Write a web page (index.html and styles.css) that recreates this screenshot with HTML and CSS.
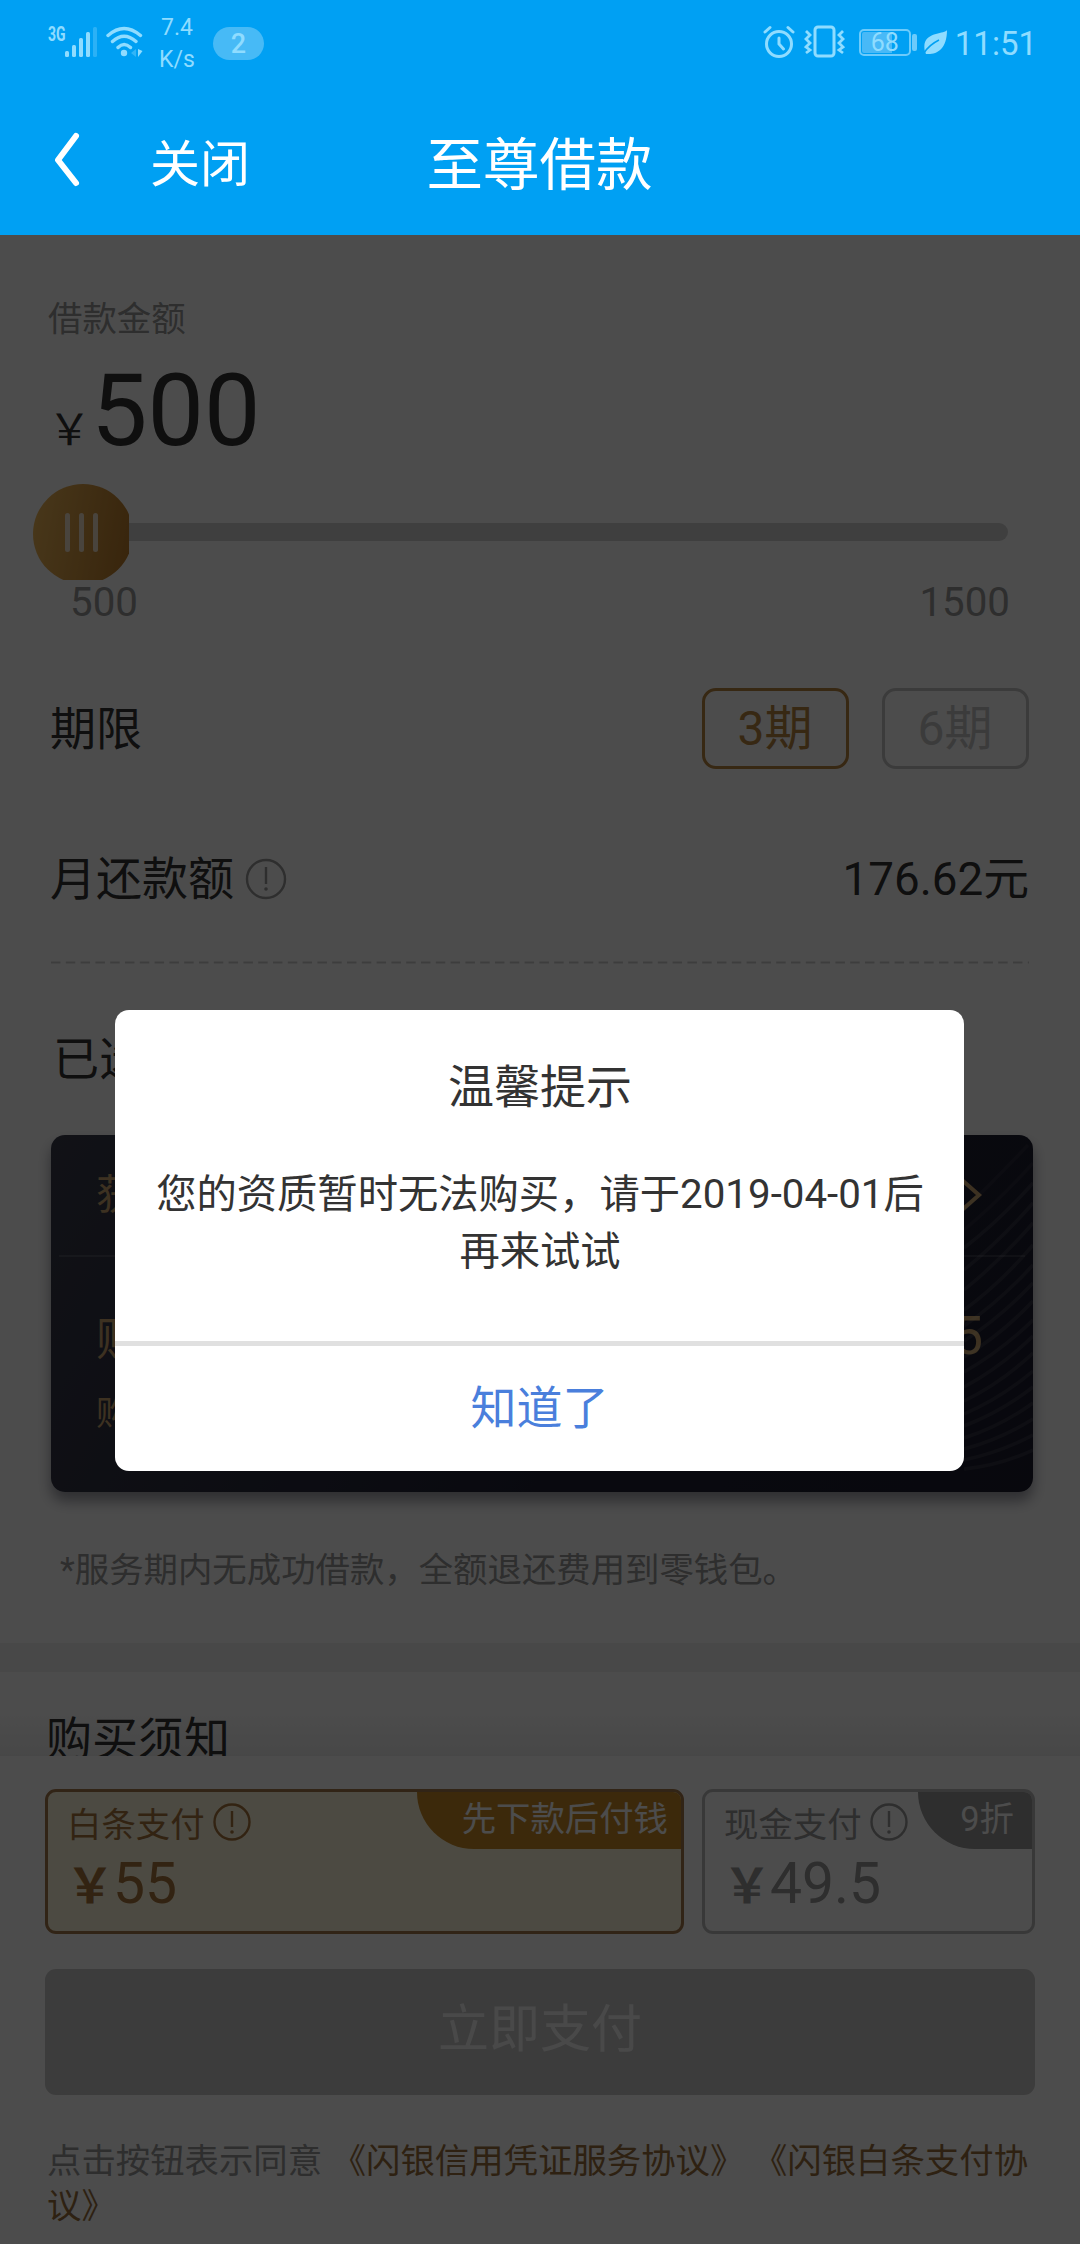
FILE: index.html
```html
<!DOCTYPE html>
<html lang="zh-CN">
<head>
<meta charset="utf-8">
<title>至尊借款</title>
<link rel="stylesheet" href="styles.css">
</head>
<body>
<div class="phone">
  <header class="header">
    <div class="status">
      <div class="status-left">
        <span class="net">3G</span>
        <svg class="signal" width="34" height="32" viewBox="0 0 34 32" fill="currentColor"><rect x="0" y="25" width="4" height="6" rx="1.5"/><rect x="7" y="19" width="4" height="12" rx="1.5"/><rect x="14" y="12" width="4" height="19" rx="1.5"/><rect x="21" y="6" width="4" height="25" rx="1.5"/><rect x="28" y="1" width="4" height="30" rx="1.5" opacity=".3"/></svg>
        <svg class="wifi" width="38" height="32" viewBox="0 0 38 32" fill="none" stroke="currentColor" stroke-width="3.4" stroke-linecap="round"><path d="M2 9.500Q18 -4.500 34.500 9.500M6.500 15.500Q18 5 30 15.500M12 21.500Q18 15.500 24.500 21.500"/><circle cx="18" cy="27" r="3.200" fill="currentColor" stroke="none"/><path d="M32 23v8l4.500-6z" fill="currentColor" stroke="none"/><path d="M30 23v8l-5-4z" fill="currentColor" stroke="none" opacity=".35"/></svg>
        <span class="speed">7.4<br>K/s</span>
        <span class="pill">2</span>
      </div>
      <div class="status-right">
        <svg class="alarm" width="32" height="33" viewBox="0 0 32 33" fill="none" stroke="currentColor" stroke-width="3" stroke-linecap="round"><circle cx="16" cy="19" r="12.500"/><path d="M16 13v6l4.500 5M2 7l5-4.500M30 7l-5-4.500"/></svg>
        <svg class="vibrate" width="42" height="33" viewBox="0 0 42 33" fill="none" stroke="currentColor" stroke-width="3"><rect x="11" y="2" width="19" height="29" rx="3"/><path d="M2 6l4 4-4 4 4 4-4 4 4 3-4 3M39 6l-4 4 4 4-4 4 4 4-4 3 4 3" stroke-width="2.800"/></svg>
        <span class="battery"><span class="battery-body">68</span><span class="battery-cap"></span></span>
        <svg class="leaf" width="25" height="26" viewBox="0 0 25 26"><path d="M24 1C22 5 4 3 1.500 15C1 19 1.500 22 3 25C13 26 24 21 24 1z" fill="currentColor"/><path d="M1 24Q6 16 16 11" fill="none" stroke="#00a0f3" stroke-width="1.500"/></svg>
        <span class="clock">11:51</span>
      </div>
    </div>
    <nav class="nav">
      <svg class="back" width="28" height="56" viewBox="0 0 28 56" fill="none" stroke="#fff" stroke-width="6" stroke-linecap="round" stroke-linejoin="round"><path d="M23 5L5 29L23 52"/></svg>
      <span class="close">关闭</span>
      <h1 class="title">至尊借款</h1>
    </nav>
  </header>

  <div class="view">
    <main class="content">
      <div class="label">借款金额</div>
      <div class="amount"><span class="yen">￥</span><span class="value">500</span></div>
      <div class="slider">
        <div class="thumb-clip"><div class="thumb"><i></i><i></i><i></i></div></div>
        <div class="track"></div>
      </div>
      <div class="range"><span>500</span><span>1500</span></div>
      <div class="row terms">
        <span class="row-text">期限</span>
        <div class="options"><span class="option active">3期</span><span class="option">6期</span></div>
      </div>
      <div class="row monthly">
        <span class="with-info"><span class="row-text">月还款额</span><svg class="info-lg" width="42" height="42" viewBox="0 0 42 42" fill="none" stroke="currentColor" stroke-width="2.400"><circle cx="21" cy="21" r="19"/><path d="M21 9v17"/><circle cx="21" cy="31" r="1.800" fill="currentColor" stroke="none"/></svg></span>
        <span class="row-text sum">176.62元</span>
      </div>
      <svg class="dash" width="978" height="3"><path d="M0 1.500H978" stroke="#cdcdcd" stroke-width="2" stroke-dasharray="9.500 5.300"/></svg>
      <div class="row selected">已选</div>
      <section class="vip">
        <svg class="waves" width="240" height="357" viewBox="0 0 240 357" fill="none" stroke="#fff" stroke-opacity=".09" stroke-width="3.500"><path stroke-opacity=".05" d="M171 75Q205 42 235 10M171 95Q208 64 240 28"/><path d="M171 113Q208 84 240 48M171 135Q208 105 240 68M171 155Q208 125 240 88M171 175Q208 148 240 110M171 191Q208 165 240 130M171 206Q208 182 240 148M171 222Q208 200 240 166M171 237Q208 216 240 185M171 252Q208 232 240 201M171 266Q208 248 240 218M171 279Q208 263 240 236M171 291Q208 277 240 252M171 303Q208 291 240 268M171 314Q208 304 240 284M171 325Q208 317 240 300M171 334Q208 330 240 315"/></svg>
        <div class="vip-head"><span>获</span><svg width="24" height="36" viewBox="0 0 24 36" fill="none" stroke="currentColor" stroke-width="4"><path d="M3 3L20 18L3 33"/></svg></div>
        <div class="vip-line"></div>
        <div class="vip-price"><span>购</span><strong>55</strong></div>
        <div class="vip-note">购</div>
      </section>
      <p class="footnote">*服务期内无成功借款，全额退还费用到零钱包。</p>
      <div class="band"></div>
      <h2 class="notice">购买须知</h2>
    </main>

    <footer class="pay">
      <div class="methods">
        <div class="method gold">
          <div class="method-name">白条支付<svg width="38" height="38" viewBox="0 0 38 38" fill="none" stroke="currentColor" stroke-width="2.400"><circle cx="19" cy="19" r="17.500"/><path d="M19 8v16"/><circle cx="19" cy="29" r="1.800" fill="currentColor" stroke="none"/></svg></div>
          <div class="price"><b>￥</b>55</div>
          <span class="tag">先下款后付钱</span>
        </div>
        <div class="method cash">
          <div class="method-name">现金支付<svg width="38" height="38" viewBox="0 0 38 38" fill="none" stroke="currentColor" stroke-width="2.400"><circle cx="19" cy="19" r="17.500"/><path d="M19 8v16"/><circle cx="19" cy="29" r="1.800" fill="currentColor" stroke="none"/></svg></div>
          <div class="price"><b>￥</b>49.5</div>
          <span class="tag">9折</span>
        </div>
      </div>
      <div class="submit">立即支付</div>
      <p class="agree">点击按钮表示同意 <a>《闪银信用凭证服务协议》</a> <a>《闪银白条支付协议》</a></p>
    </footer>

    <div class="overlay">
      <div class="dialog">
        <h3 class="dialog-title">温馨提示</h3>
        <p class="dialog-text">您的资质暂时无法购买，请于2019-04-01后再来试试</p>
        <div class="dialog-ok">知道了</div>
      </div>
    </div>
  </div>
</div>
</body>
</html>
```
FILE: styles.css
```css
* { box-sizing: border-box; margin: 0; padding: 0; }
body { font-family: Roboto, "Noto Sans CJK SC", sans-serif; color: #333; background: #fff; }
svg { display: block; flex: none; }
h1, h2, h3 { font-weight: 400; }
.phone { width: 1080px; height: 2244px; display: flex; flex-direction: column; overflow: hidden; }

/* header */
.header { height: 235px; flex: none; background: #00a0f3; color: #fff; }
.status { height: 86px; display: flex; justify-content: space-between; color: #8fdcff; padding: 0 43px 0 48px; }
.status-left, .status-right { display: flex; align-items: flex-start; }
.net { font-size: 20px; font-weight: 700; line-height: 20px; width: 17px; margin-top: 24px; transform: scaleX(.7); transform-origin: left; white-space: nowrap; }
.signal { margin-top: 26px; }
.wifi { margin: 26px 0 0 7px; }
.speed { font-size: 23px; line-height: 32px; margin-top: 12px; margin-left: 15px; width: 36px; text-align: center; }
.pill { width: 51px; height: 33px; border-radius: 17px; background: rgba(255,255,255,.28); font-size: 27px; font-weight: 500; line-height: 34px; text-align: center; margin: 27px 0 0 18px; }
.alarm { margin-top: 25px; }
.vibrate { margin: 25px 0 0 9px; }
.battery { display: flex; align-items: center; gap: 1px; margin: 29px 0 0 13px; }
.battery-body { width: 52px; height: 27px; border: 2px solid #6dcbfb; border-radius: 5px; font-size: 25px; line-height: 22px; text-align: center; background: linear-gradient(90deg, #48b9f7 66%, transparent 66%) content-box; padding: 1px; }
.battery-cap { width: 5px; height: 17px; background: #6dcbfb; border-radius: 2px; }
.leaf { margin: 29px 0 0 6px; }
.clock { font-size: 33px; line-height: 40px; margin: 24px 0 0 7px; }
.nav { height: 149px; display: grid; grid-template-columns: 97px 1fr auto 1fr; align-items: center; padding: 0 53px; }
.back { margin-top: -3px; }
.close { font-size: 50px; line-height: 60px; margin-top: 8px; }
.title { font-size: 56.500px; line-height: 70px; margin-top: 10px; position: relative; left: -49px; }

/* loan form */
.view { flex: 1; min-height: 0; position: relative; display: flex; flex-direction: column; }
.content { flex: 1; min-height: 0; overflow: hidden; padding-top: 62px; display: flex; flex-direction: column; font-size: 46px; background: linear-gradient(180deg, #fff 1475px, #efefef 1521px); }
.content > * { flex: none; }
.label { font-size: 34.400px; line-height: 44px; color: #999; padding-left: 48px; }
.amount { margin-top: 12px; height: 116px; line-height: 116px; padding-left: 48px; display: flex; align-items: baseline; }
.yen { font-size: 43px; }
.value { font-size: 100.500px; }
.slider { height: 96px; margin: 15px 72px 0 33px; display: flex; align-items: center; }
.thumb-clip { width: 96px; height: 96px; overflow: hidden; flex: none; }
.thumb { width: 100px; height: 100px; border-radius: 50%; background: linear-gradient(100deg, #f2ba5a, #b87828); display: flex; justify-content: center; align-items: center; gap: 9px; padding: 0 3px 3px 0; }
.thumb i { width: 5px; height: 39px; border-radius: 3px; background: #f6e4cb; }
.track { flex: 1; height: 18px; background: #d4d4d4; border-radius: 0 9px 9px 0; }
.range { height: 42px; line-height: 45px; font-size: 40.300px; color: #999; display: flex; justify-content: space-between; padding: 0 70px 0 70px; }
.row { display: flex; justify-content: space-between; align-items: center; padding: 0 51px 0 50px; height: 60px; }
.row-text { padding-bottom: 8px; }
.sum { font-size: 45.800px; }
.terms { height: 81px; margin-top: 66px; }
.options { display: flex; gap: 33px; }
.option { width: 147px; height: 81px; border: 3px solid #c6c6c6; border-radius: 14px; font-size: 48px; line-height: 75px; text-align: center; color: #c6c6c6; padding-right: 1px; }
.option.active { border-color: #b98542; color: #b98542; }
.monthly { margin-top: 80px; }
.with-info { display: flex; align-items: center; }
.info-lg { margin: 0 0 0 11px; color: #999; }
.dash { margin: 52px 0 0 51px; }
.selected { margin-top: 61px; padding-left: 53px; }

/* membership card */
.vip { position: relative; margin: 50px 47px 0 51px; height: 357px; border-radius: 14px; background: linear-gradient(120deg, #3a3c4c, #1f2034 60%, #1c1c2e); box-shadow: 0 9px 14px rgba(30,30,50,.45); color: #cba670; padding: 16px 50px 0 45px; }
.waves { position: absolute; right: 0; top: 0; border-radius: 14px; }
.vip-head { display: flex; justify-content: space-between; align-items: center; height: 84px; font-size: 41px; }
.vip-head span { padding-bottom: 4px; }
.vip-head svg { margin-top: 4px; }
.vip-line { height: 2px; margin: 20px -42px 0 -37px; background: rgba(255,255,255,.12); }
.vip-price { display: flex; justify-content: space-between; align-items: center; height: 84px; font-size: 46px; margin-top: 37px; }
.vip-price span { padding-bottom: 2px; }
.vip-price strong { font-size: 53px; font-weight: 400; }
.vip-note { font-size: 34.400px; line-height: 44px; margin-top: 13px; }
.footnote { margin-top: 56px; font-size: 34.400px; line-height: 44px; padding-left: 60px; color: #999; }
.band { height: 29px; margin-top: 51px; background: #f2f2f2; }
.notice { margin-top: 38px; font-size: 46px; line-height: 58px; padding-left: 46px; }

/* payment */
.pay { flex: none; height: 488px; background: #fff; padding: 33px 45px 0; }
.methods { display: grid; grid-template-columns: 639px 333px; gap: 18px; }
.method { position: relative; height: 145px; border: 3px solid #bdbdbd; border-radius: 11px; overflow: hidden; color: #999; padding: 11px 0 0 19px; }
.method-name { display: flex; align-items: center; height: 38px; font-size: 34.400px; gap: 8px; }
.price { font-size: 57px; line-height: 66px; margin: 10px 0 0 -1px; display: flex; align-items: baseline; }
.price b { font-size: 48px; font-weight: 700; margin-right: -1px; }
.tag { position: absolute; top: 0; right: 0; height: 57px; line-height: 55px; font-size: 34.400px; color: #fff; border-bottom-left-radius: 57px; text-align: right; padding-right: 13px; }
.gold { background: #fff8dc; border-color: #a6784a; color: #a9753c; }
.gold .tag { width: 264px; background: #c98a25; }
.cash .tag { width: 114px; background: #999; padding-right: 18px; }
.submit { margin-top: 35px; height: 126px; border-radius: 11px; background: #c9c9c9; color: #f5f5f5; font-size: 51px; line-height: 122px; text-align: center; }
.agree { margin: 44px 0 0 2px; font-size: 34.400px; line-height: 45px; color: #999; }
.agree a { color: #9a703c; }
.agree a:first-child { margin-left: 1px; }

/* dialog */
.overlay { position: absolute; inset: 0; background: rgba(0,0,0,.7); padding-top: 775px; }
.dialog { width: 849px; height: 461px; margin-left: 115px; background: #fff; border-radius: 14px; text-align: center; display: flex; flex-direction: column; padding-left: 1px; }
.dialog-title { margin-top: 47px; font-size: 46px; line-height: 60px; }
.dialog-text { margin: 49px 36px 0; font-size: 40.300px; line-height: 57px; height: 175px; flex: none; }
.dialog-ok { flex: 1; border-top: 5px solid #e0e0e0; margin-left: -1px; font-size: 46px; line-height: 124px; color: #4a7fdc; }
```
